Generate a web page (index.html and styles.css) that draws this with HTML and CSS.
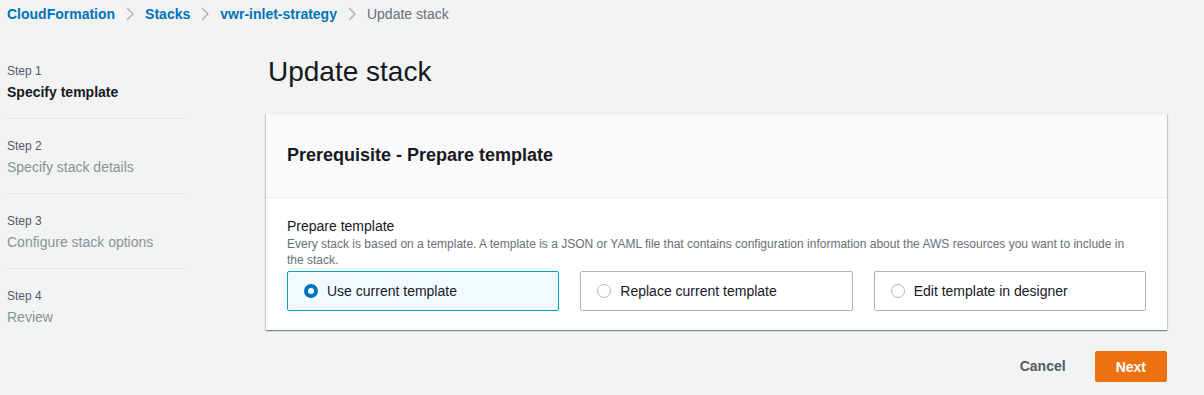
FILE: index.html
```html
<!DOCTYPE html>
<html lang="en">
<head>
  <meta charset="UTF-8">
  <title>Update stack</title>
  <link rel="stylesheet" href="styles.css">
</head>
<body>

  <nav class="breadcrumbs">
    <a href="#">CloudFormation</a>
    <svg class="chevron" viewBox="0 0 8 14"><polyline points="1,1 7,7 1,13"/></svg>
    <a href="#">Stacks</a>
    <svg class="chevron" viewBox="0 0 8 14"><polyline points="1,1 7,7 1,13"/></svg>
    <a href="#">vwr-inlet-strategy</a>
    <svg class="chevron" viewBox="0 0 8 14"><polyline points="1,1 7,7 1,13"/></svg>
    <span class="current">Update stack</span>
  </nav>

  <div class="layout">
    <ul class="steps">
      <li class="step active">
        <span class="step-label">Step 1</span>
        <span class="step-title">Specify template</span>
      </li>
      <li class="step">
        <span class="step-label">Step 2</span>
        <span class="step-title">Specify stack details</span>
      </li>
      <li class="step">
        <span class="step-label">Step 3</span>
        <span class="step-title">Configure stack options</span>
      </li>
      <li class="step last">
        <span class="step-label">Step 4</span>
        <span class="step-title">Review</span>
      </li>
    </ul>

    <main class="content">
      <h1>Update stack</h1>

      <section class="card">
        <div class="card-header">
          <h2>Prerequisite - Prepare template</h2>
        </div>
        <div class="card-body">
          <div class="field-label">Prepare template</div>
          <div class="field-desc">Every stack is based on a template. A template is a JSON or YAML file that contains configuration information about the AWS resources you want to include in the stack.</div>
          <div class="tiles">
            <label class="tile selected">
              <span class="radio"></span>
              <span>Use current template</span>
            </label>
            <label class="tile">
              <span class="radio"></span>
              <span>Replace current template</span>
            </label>
            <label class="tile">
              <span class="radio"></span>
              <span>Edit template in designer</span>
            </label>
          </div>
        </div>
      </section>

      <div class="actions">
        <button class="btn-link">Cancel</button>
        <button class="btn-primary">Next</button>
      </div>
    </main>
  </div>

</body>
</html>
```

FILE: styles.css
```css
* { box-sizing: border-box; }
body {
  margin: 0;
  background: #f2f3f3;
  font-family: 'Liberation Sans', Arial, sans-serif;
  font-size: 14px;
  color: #16191f;
}
.breadcrumbs {
  display: flex;
  align-items: center;
  padding: 4px 7px 0;
  line-height: 20px;
  font-size: 14px;
}
.breadcrumbs a {
  color: #0073bb;
  text-decoration: none;
  font-weight: bold;
}
.breadcrumbs .current { color: #687078; }
.chevron {
  width: 8px;
  height: 14px;
  margin: 0 11px 0 11px;
  fill: none;
  stroke: #aab7b8;
  stroke-width: 1.5;
}
.layout {
  display: flex;
  padding-left: 7px;
}
.steps {
  list-style: none;
  margin: 39px 0 0;
  padding: 0;
  width: 180px;
  flex-shrink: 0;
}
.step {
  display: flex;
  flex-direction: column;
  gap: 3px;
  padding: 19px 0 16px;
  border-bottom: 1px solid #e5e8e8;
}
.step:first-child { padding-top: 0; }
.step.last { border-bottom: none; }
.step-label {
  font-size: 12px;
  line-height: 16px;
  color: #545b64;
}
.step-title {
  font-size: 14px;
  line-height: 20px;
  color: #879596;
}
.step.active .step-title {
  color: #16191f;
  font-weight: bold;
}
.content {
  flex: 1;
  margin-left: 79px;
  padding-right: 37px;
}
h1 {
  margin: 30px 0 23px 2px;
  font-size: 28px;
  line-height: 36px;
  font-weight: normal;
  color: #16191f;
}
.card {
  background: white;
  border-top: 1px solid #eaeded;
  box-shadow: 0 1px 1px 0 rgba(0,28,36,0.3), 1px 1px 1px 0 rgba(0,28,36,0.15), -1px 1px 1px 0 rgba(0,28,36,0.15);
}
.card-header {
  background: #fafafa;
  border-bottom: 1px solid #eaeded;
  padding: 29px 21px 30px;
}
.card-header h2 {
  margin: 0;
  font-size: 18px;
  line-height: 24px;
  font-weight: bold;
}
.card-body { padding: 18px 21px 19px; }
.field-label {
  font-size: 14px;
  line-height: 20px;
}
.field-desc {
  font-size: 12px;
  line-height: 16px;
  color: #687078;
  padding-right: 10px;
}
.tiles {
  margin-top: 3px;
  display: grid;
  grid-template-columns: repeat(3, 1fr);
  gap: 21px;
}
.tile {
  display: flex;
  align-items: center;
  gap: 9px;
  height: 40px;
  padding: 0 16px;
  border: 1px solid #aab7b8;
  border-radius: 2px;
  background: white;
  font-size: 14px;
  cursor: pointer;
}
.tile.selected {
  border-color: #00a1c9;
  background: #f1faff;
}
.radio {
  width: 14px;
  height: 14px;
  border-radius: 50%;
  border: 1px solid #aab7b8;
  background: white;
  flex-shrink: 0;
}
.tile.selected .radio {
  border: 4px solid #0073bb;
}
.actions {
  display: flex;
  justify-content: flex-end;
  align-items: center;
  gap: 9px;
  margin-top: 20px;
}
.actions button {
  font-family: inherit;
  font-size: 14px;
  font-weight: bold;
  line-height: 20px;
  border-radius: 2px;
  cursor: pointer;
}
.btn-link {
  background: none;
  border: none;
  color: #545b64;
  padding: 6px 20px;
}
.btn-primary {
  background: #ec7211;
  border: 1px solid #ec7211;
  color: white;
  padding: 5px 20px;
  height: 31px;
}
```
